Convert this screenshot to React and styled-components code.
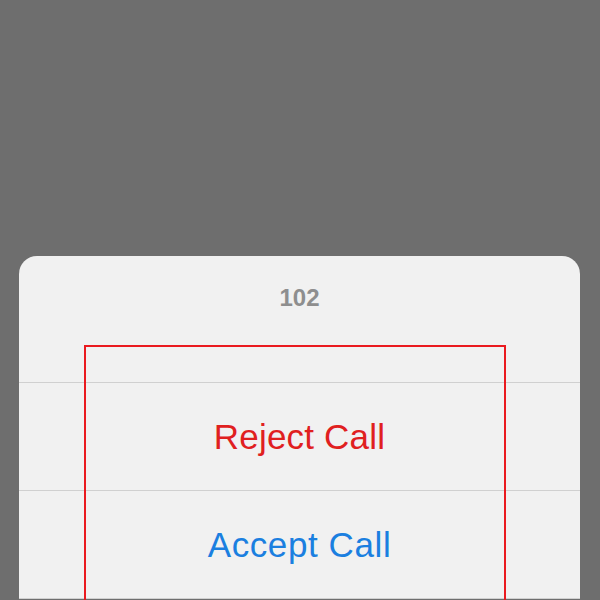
import styled, { createGlobalStyle } from "styled-components";

const GlobalStyle = createGlobalStyle`
  html, body {
    margin: 0;
    padding: 0;
    background: #6e6e6e;
  }
  body {
    font-family: "Liberation Sans", Arial, sans-serif;
  }
`;

const Page = styled.div`
  height: 600px;
  overflow: hidden;
  padding: 256px 20px 0 19px;
  box-sizing: border-box;
`;

const Sheet = styled.div`
  position: relative;
  background: #f1f1f1;
  border-radius: 18px 18px 0 0;
  display: flex;
  flex-direction: column;
`;

const Title = styled.div`
  height: 127px;
  display: flex;
  align-items: center;
  justify-content: center;
  padding-bottom: 42px;
  box-sizing: border-box;
  font-size: 24px;
  font-weight: bold;
  color: #8e8e8e;
  border-bottom: 1px solid #d0d0d0;
`;

const Action = styled.div`
  height: 107px;
  display: flex;
  align-items: center;
  justify-content: center;
  font-size: 35px;
  color: ${(p) => (p.$danger ? "#e0201f" : "#1b7fe0")};
  border-bottom: 1px solid #d0d0d0;
  letter-spacing: ${(p) => (p.$danger ? "0.2px" : "0.6px")};
`;

const Highlight = styled.div`
  position: absolute;
  left: 65px;
  top: 89px;
  width: 422px;
  height: 320px;
  border: 2px solid #ea1a1f;
  box-sizing: border-box;
  pointer-events: none;
`;

export default function App() {
  return (
    <>
      <GlobalStyle />
      <Page>
        <Sheet>
          <Title>102</Title>
          <Action $danger>Reject Call</Action>
          <Action>Accept Call</Action>
          <Highlight />
        </Sheet>
      </Page>
    </>
  );
}
